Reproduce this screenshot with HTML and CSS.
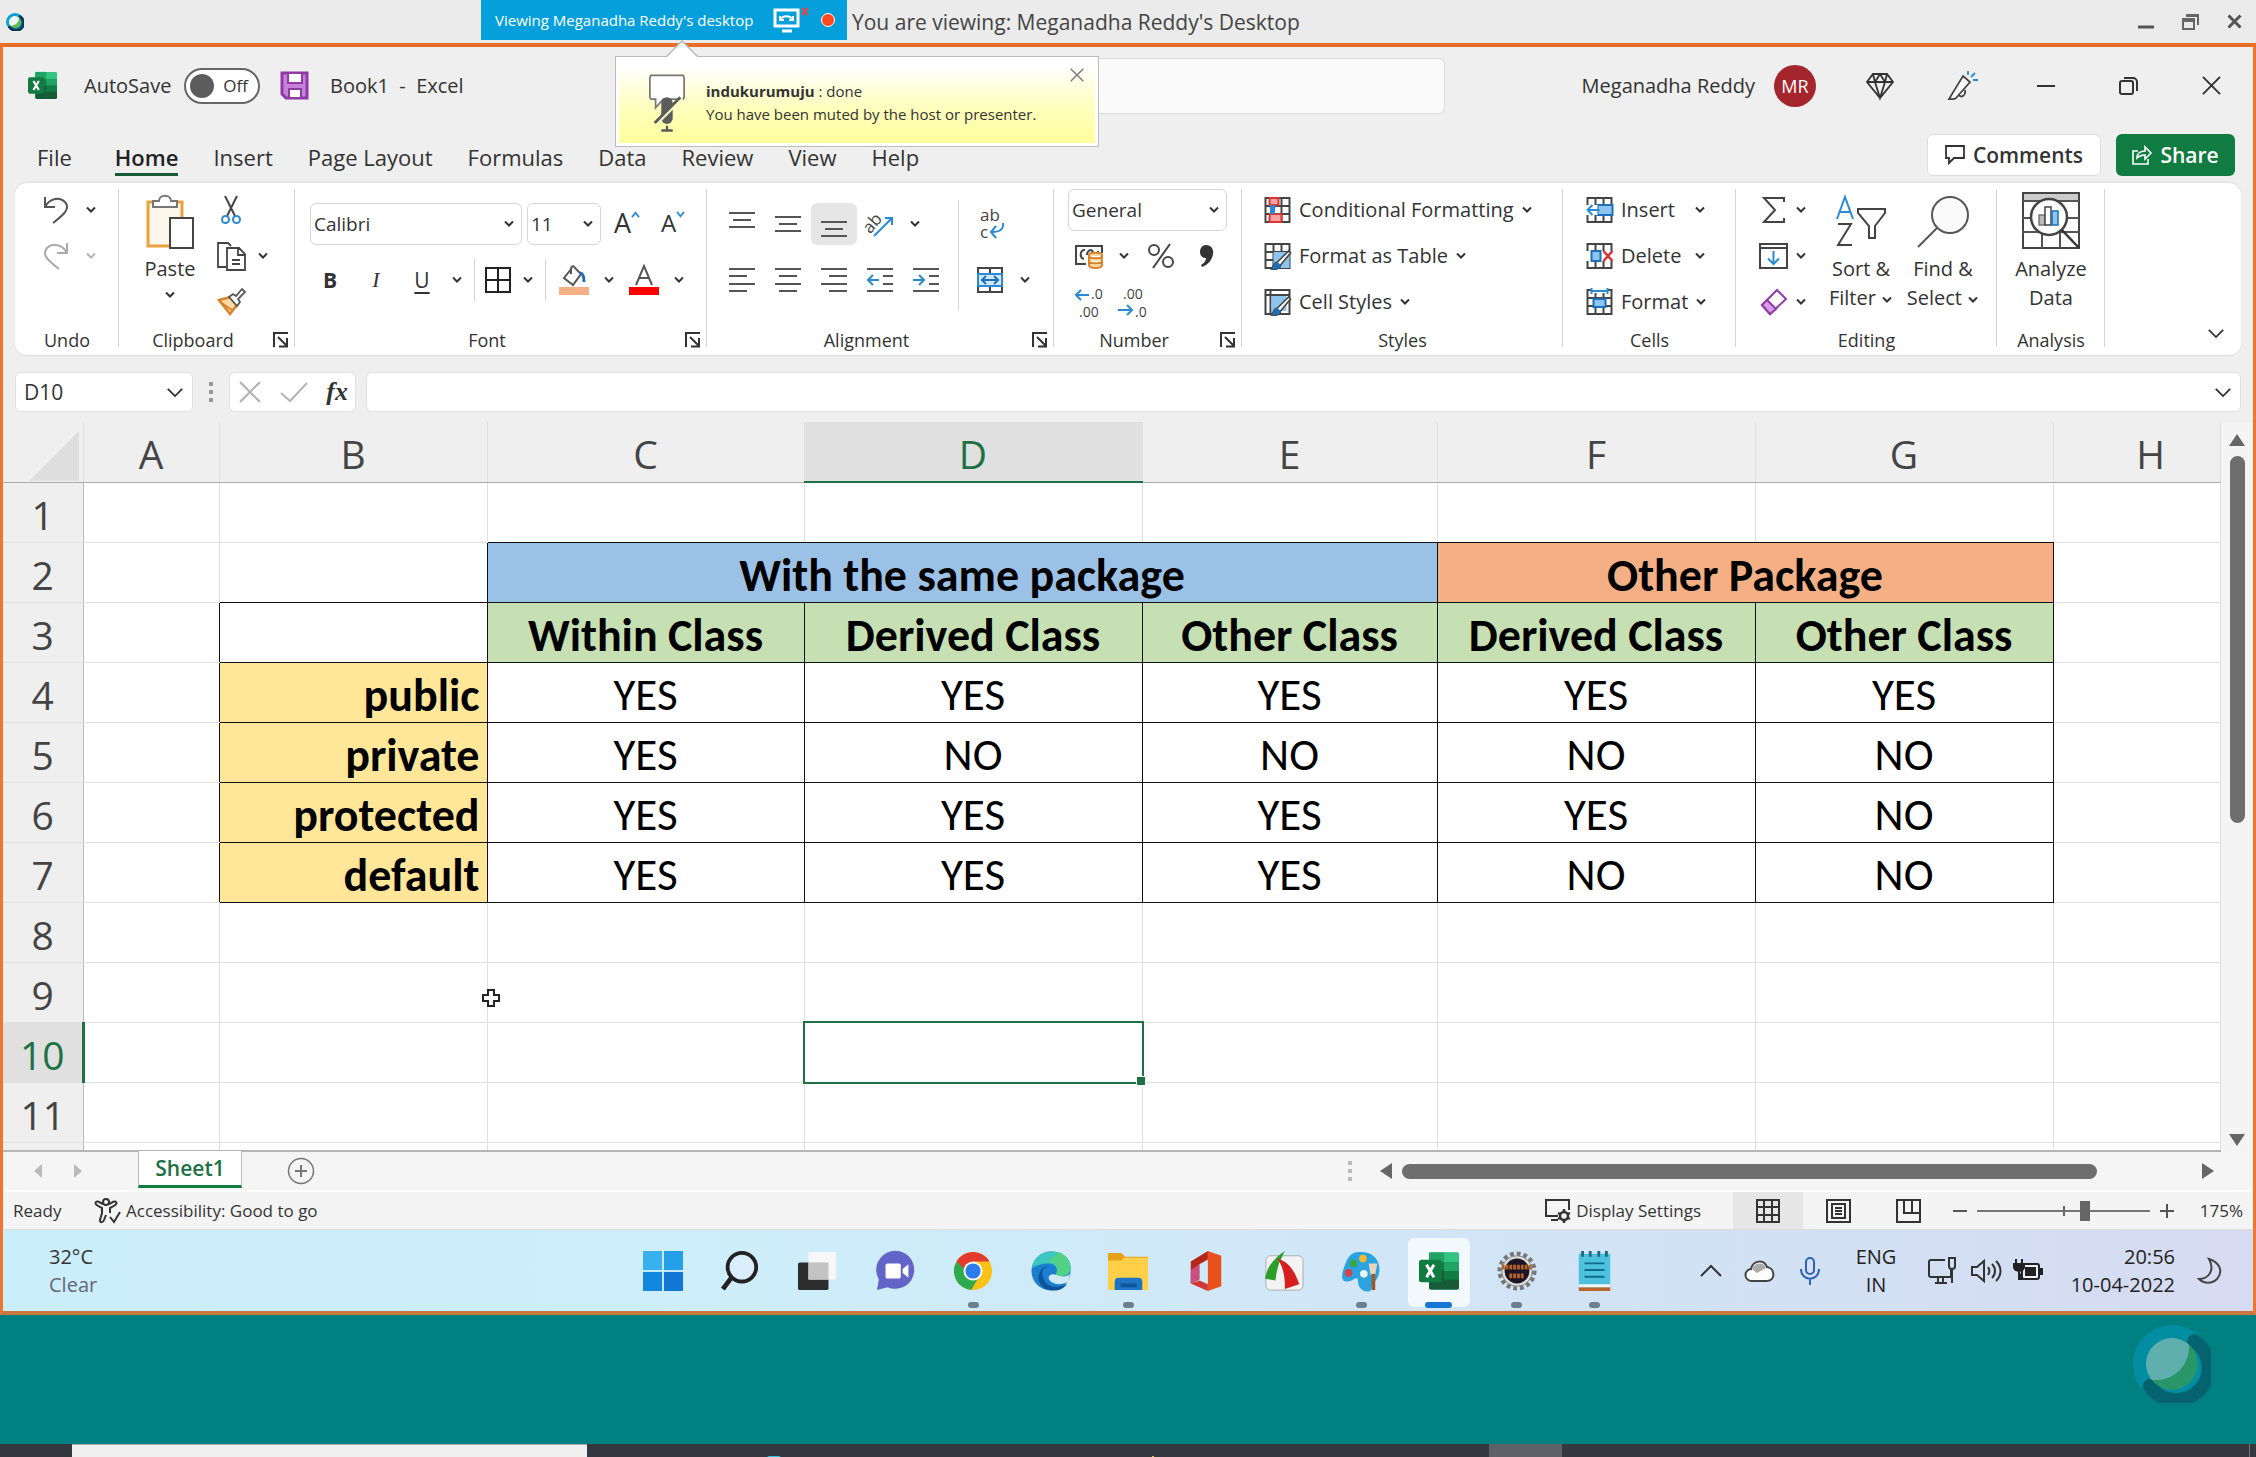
FILE: index.html
```html
<!DOCTYPE html>
<html lang="en">
<head>
<meta charset="utf-8">
<title>Meganadha Reddy's Desktop</title>
<link rel="stylesheet" href="styles.css">
</head>
<body>
<svg class="sprite" aria-hidden="true">
  <symbol id="chev" viewBox="0 0 12 8"><path d="M2 1.5l4 4 4-4" fill="none" stroke="currentColor" stroke-width="2"/></symbol>
  <symbol id="chev-lg" viewBox="0 0 20 12"><path d="M2 2l8 8 8-8" fill="none" stroke="currentColor" stroke-width="2"/></symbol>
  <symbol id="launch" viewBox="0 0 16 16"><path d="M1 15V1h14M5 5l9 9M14 6v8.500H6" fill="none" stroke="#333" stroke-width="2"/></symbol>
  <symbol id="x" viewBox="0 0 20 20"><path d="M1 1l18 18M19 1L1 19" fill="none" stroke="currentColor" stroke-width="2"/></symbol>
  <symbol id="excel" viewBox="0 0 32 30">
    <path d="M10 0h20a2 2 0 0 1 2 2v26a2 2 0 0 1-2 2H10a2 2 0 0 1-2-2V2a2 2 0 0 1 2-2z" fill="#21a366"/>
    <path d="M8 0h12v8H8z" fill="#21a366"/><path d="M20 0h10a2 2 0 0 1 2 2v6H20z" fill="#33c481"/><path d="M8 8h12v7H8zM20 8h12v7H20z" fill="#107c41"/><path d="M20 8h12v7H20z" fill="#21a366"/>
    <path d="M8 15h12v15H10a2 2 0 0 1-2-2z" fill="#185c37"/><path d="M20 15h12v8H20z" fill="#107c41"/><path d="M20 22h12v6a2 2 0 0 1-2 2H20z" fill="#185c37"/>
    <rect y="6" width="18" height="18" rx="2" fill="#107c41"/><path d="M6 10l6 10M12 10L6 20" stroke="#fff" stroke-width="2.400"/>
  </symbol>
  <symbol id="webex" viewBox="0 0 40 40">
    <circle cx="20" cy="20" r="20" fill="#07a2d8"/>
    <path d="M31.300 8.200a16.500 16.500 0 1 1-22.800 23" fill="none" stroke="#0b3a56" stroke-width="7" stroke-linecap="round"/>
    <circle cx="20" cy="20" r="13.200" fill="#64b948"/><path d="M28.700 10.100C29 21 21 29 9.600 28.200A13.200 13.200 0 0 1 28.700 10.100z" fill="#eef6f6"/>
  </symbol>
  <symbol id="grid" viewBox="0 0 28 28"><path d="M2 2h24v24H2zM2 10h24M2 18h24M10 2v24M18 2v24" fill="#fff" stroke="#444" stroke-width="2"/></symbol>
</svg>

<header class="viewer-bar">
  <svg class="viewer-logo"><use href="#webex"/></svg>
  <div class="share-tab">
    <span>Viewing Meganadha Reddy's desktop</span>
    <svg width="38" height="28" viewBox="0 0 38 28"><path d="M2 4h23v16H2z" fill="none" stroke="#fff" stroke-width="3"/><path d="M7 14c3-5 10-5 13 0M7 10v4h4M20 10v4h-4" fill="none" stroke="#fff" stroke-width="2"/><path d="M9 25h10" stroke="#fff" stroke-width="3"/><path d="M29 2l6 7M35 2l-6 7" stroke="#e0483c" stroke-width="2"/></svg>
    <i class="rec"></i>
  </div>
  <h1>You are viewing: Meganadha Reddy's Desktop</h1>
  <div class="viewer-controls">
    <button aria-label="Minimize"><svg width="16" height="16" viewBox="0 0 16 16"><path d="M0 13h16" stroke="#555" stroke-width="3"/></svg></button>
    <button aria-label="Restore"><svg width="17" height="17" viewBox="0 0 17 17"><path d="M1 6h11v10H1zM1 8h11M4 2h12v10M4 3h12" fill="none" stroke="#666" stroke-width="2"/></svg></button>
    <button aria-label="Close"><svg width="15" height="15" viewBox="0 0 20 20"><path d="M2 2l16 16M18 2L2 18" stroke="#555" stroke-width="4"/></svg></button>
  </div>
  <aside class="toast">
    <svg class="toast-arrow" viewBox="0 0 32 18"><path d="M0 17L16 1l16 16v1H0z" fill="#fff"/><path d="M0 17L16 1l16 16" fill="none" stroke="#bbb" stroke-width="1.500"/></svg>
    <svg class="toast-icon" viewBox="0 0 40 60"><path d="M3 1h34l1 2v21l-1 2H16l-8 9v-9H3l-1-2V3z" fill="#fff" stroke="#777" stroke-width="1.800"/><rect x="14" y="24" width="12" height="28" rx="6" fill="#5c5c5c"/><path d="M10 51L36 25" stroke="#fdfdc8" stroke-width="3"/><path d="M7 51L34 24" stroke="#5c5c5c" stroke-width="3"/><path d="M20 54v4M14 59h12" stroke="#5c5c5c" stroke-width="2.500"/></svg>
    <p><b>indukurumuju</b> : done<br>You have been muted by the host or presenter.</p>
    <button aria-label="Dismiss"><svg width="14" height="14"><use href="#x"/></svg></button>
  </aside>
</header>

<main class="remote">
  <div class="titlebar">
    <svg class="app-icon"><use href="#excel"/></svg>
    <label class="autosave">AutoSave <input type="checkbox" class="sr"><span class="toggle">Off</span></label>
    <button class="save" aria-label="Save"><svg width="29" height="29" viewBox="0 0 29 29"><path d="M2 2h25v25H6l-4-4z" fill="#c582d6" stroke="#8f3aa5" stroke-width="3"/><path d="M8 2h14v10H8zM9 18h12v9H9z" fill="#fff" stroke="#8f3aa5" stroke-width="2"/></svg></button>
    <span class="doc-name">Book1&nbsp; -&nbsp; Excel</span>
    <input class="search" type="search" aria-label="Search">
    <span class="user">Meganadha Reddy</span>
    <span class="avatar">MR</span>
    <div class="window-tools">
      <button aria-label="Premium"><svg width="28" height="28" viewBox="0 0 28 28"><path d="M7 2h14l6 8-13 16L1 10zM1 10h26M7 2l2 8 5 16 5-16 2-8M14 2l-5 8M14 2l5 8" fill="none" stroke="#333" stroke-width="1.800"/></svg></button>
      <button aria-label="Coming soon"><svg width="30" height="30" viewBox="0 0 30 30"><path d="M15 5l7 6L8 27c-2 2-5 1-7 1zM11 24c2 3 7 1 6-5" fill="#fff" stroke="#444" stroke-width="1.800"/><path d="M20 4V0M23 6l4-4M25 9h5" stroke="#2a8ad4" stroke-width="1.800"/></svg></button>
      <button aria-label="Minimize Excel"><svg width="18" height="18" viewBox="0 0 18 18"><path d="M0 9h18" stroke="#333" stroke-width="2"/></svg></button>
      <button aria-label="Restore Excel"><svg width="19" height="19" viewBox="0 0 19 19"><rect x="1" y="5" width="13" height="13" rx="2" fill="none" stroke="#333" stroke-width="2"/><path d="M5 2h9a4 4 0 0 1 4 4v9" fill="none" stroke="#333" stroke-width="2"/></svg></button>
      <button aria-label="Close Excel"><svg width="19" height="19"><use href="#x"/></svg></button>
    </div>
  </div>

  <nav class="tabs">
    <a href="#" class="file">File</a><a href="#" class="active">Home</a><a href="#">Insert</a><a href="#">Page Layout</a><a href="#">Formulas</a><a href="#">Data</a><a href="#">Review</a><a href="#">View</a><a href="#">Help</a>
    <button class="comments"><svg width="20" height="20" viewBox="0 0 20 20"><path d="M1 1h18v12H9l-5 5v-5H1z" fill="none" stroke="#333" stroke-width="1.800"/></svg>Comments</button>
    <button class="share"><svg width="20" height="20" viewBox="0 0 20 20"><path d="M6 6H1v13h15v-5M5 13c0-5 4-7 8-7V2l6 6-6 6v-4c-4 0-6 1-8 3z" fill="none" stroke="#fff" stroke-width="1.600"/></svg>Share</button>
  </nav>

  <section class="ribbon">
    <div class="group g-undo">
      <div class="rows">
        <div class="row"><button class="cell" aria-label="Undo"><svg width="28" height="28" viewBox="0 0 28 28"><path d="M3 1v10h10M3 11c4-8 14-11 20-5 6 7-2 13-12 21" fill="none" stroke="#555" stroke-width="2"/></svg></button><button class="drop" aria-label="Undo list"><svg><use href="#chev"/></svg></button></div>
        <div class="row dim"><button class="cell" aria-label="Redo"><svg width="28" height="28" viewBox="0 0 28 28"><path d="M25 1v10H15M25 11C21 3 11 0 5 6c-6 7 2 13 12 21" fill="none" stroke="#aaa" stroke-width="2"/></svg></button><button class="drop" aria-label="Redo list"><svg><use href="#chev"/></svg></button></div>
      </div>
      <div class="caption"><span>Undo</span></div>
    </div>

    <div class="group g-clip">
      <div class="body">
        <button class="big"><svg width="50" height="57" viewBox="0 0 50 57"><path d="M3 10h34v44H3z" fill="#fdf6ea" stroke="#e8a33d" stroke-width="3"/><path d="M8 15V9h6c0-7 12-7 12 0h6v6z" fill="#fff" stroke="#777" stroke-width="2"/><path d="M25 26h23v30H25z" fill="#fff" stroke="#444" stroke-width="2"/></svg><span>Paste</span><svg class="chev"><use href="#chev"/></svg></button>
        <div class="rows">
          <div class="row"><button class="cell" aria-label="Cut"><svg width="20" height="28" viewBox="0 0 20 28"><path d="M4 0l10 20M16 0L6 20" stroke="#444" stroke-width="2"/><circle cx="4.500" cy="23.500" r="3.500" fill="none" stroke="#2a8ad4" stroke-width="2"/><circle cx="15.500" cy="23.500" r="3.500" fill="none" stroke="#2a8ad4" stroke-width="2"/></svg></button></div>
          <div class="row"><button class="cell" aria-label="Copy"><svg width="29" height="29" viewBox="0 0 29 29"><path d="M9 25H1V1h10l3 3M10 6h12l6 6v16H10zM21 6v7h7M15 18h8M15 22h8" fill="#fff" stroke="#444" stroke-width="1.800"/></svg></button><button class="drop" aria-label="Copy options"><svg><use href="#chev"/></svg></button></div>
          <div class="row"><button class="cell" aria-label="Format Painter"><svg width="29" height="28" viewBox="0 0 29 28"><path d="M2 12l12-3 6 8-7 9z" fill="#fbd9a5" stroke="#d9822b" stroke-width="2.500"/><path d="M3 14l12 8" stroke="#d9822b" stroke-width="2"/><path d="M12 9l4-3 3 2 6-7 3 3-7 7 2 3-3 4z" fill="#fff" stroke="#555" stroke-width="1.800"/></svg></button></div>
        </div>
      </div>
      <div class="caption"><span>Clipboard</span><button aria-label="Clipboard settings"><svg><use href="#launch"/></svg></button></div>
    </div>

    <div class="group g-font">
      <div class="lines">
        <div class="row">
          <span class="picker pick-font"><select aria-label="Font"><option>Calibri</option></select><svg><use href="#chev"/></svg></span>
          <span class="picker pick-size"><select aria-label="Font size"><option>11</option></select><svg><use href="#chev"/></svg></span>
          <button class="cell glyph-lg" aria-label="Increase font size">A<svg class="hat" viewBox="0 0 10 8"><path d="M1 7l4-5 4 5" fill="none" stroke="#2a8ad4" stroke-width="2"/></svg></button>
          <button class="cell glyph-md" aria-label="Decrease font size">A<svg class="hat" viewBox="0 0 10 8"><path d="M1 1l4 5 4-5" fill="none" stroke="#2a8ad4" stroke-width="2"/></svg></button>
        </div>
        <div class="row">
          <button class="cell glyph bold">B</button><button class="cell glyph ital">I</button><button class="cell glyph under">U</button><button class="drop" aria-label="Underline style"><svg><use href="#chev"/></svg></button>
          <i class="rule"></i>
          <button class="cell narrow" aria-label="Borders"><svg width="28" height="28" viewBox="0 0 28 28"><path d="M2 2h24v24H2zM14 2v24M2 14h24" fill="none" stroke="#222" stroke-width="2"/></svg></button><button class="drop" aria-label="Border style"><svg><use href="#chev"/></svg></button>
          <i class="rule"></i>
          <button class="cell" aria-label="Fill color"><svg width="30" height="30" viewBox="0 0 30 30"><path d="M13 3L5 13l9 7 8-11-6-6c-1-3-4-2-4 1v5" fill="#fff" stroke="#555" stroke-width="2"/><path d="M21 8c3 0 4 3 4 9" fill="none" stroke="#1c6fb8" stroke-width="3"/><path d="M0 22h30v8H0z" fill="#f4b084"/></svg></button><button class="drop" aria-label="Fill colors"><svg><use href="#chev"/></svg></button>
          <button class="cell" aria-label="Font color"><svg width="30" height="30" viewBox="0 0 30 30"><path d="M7 20L15 1l8 19M10 13h10" fill="none" stroke="#555" stroke-width="2"/><path d="M0 22h30v8H0z" fill="#f00"/></svg></button><button class="drop" aria-label="Font colors"><svg><use href="#chev"/></svg></button>
        </div>
      </div>
      <div class="caption"><span>Font</span><button aria-label="Font settings"><svg><use href="#launch"/></svg></button></div>
    </div>

    <div class="group g-align">
      <div class="body">
        <div class="lines">
          <div class="row">
            <button class="cell" aria-label="Top align"><svg class="al" viewBox="0 0 26 26"><path d="M0 2h26M4 9h18M0 16h26"/></svg></button>
            <button class="cell" aria-label="Middle align"><svg class="al" viewBox="0 0 26 26"><path d="M0 6h26M4 13h18M0 20h26"/></svg></button>
            <button class="cell on" aria-label="Bottom align"><svg class="al" viewBox="0 0 26 26"><path d="M0 11h26M4 18h18M0 25h26"/></svg></button>
            <button class="cell orient" aria-label="Orientation"><svg width="30" height="30" viewBox="0 0 30 30"><text x="-1" y="20" transform="rotate(-50 8 16)" class="icon-text">ab</text><path d="M9 27L27 9M27 16V9h-7" fill="none" stroke="#2a8ad4" stroke-width="2"/></svg></button><button class="drop" aria-label="Orientation list"><svg><use href="#chev"/></svg></button>
          </div>
          <div class="row">
            <button class="cell" aria-label="Align left"><svg class="al" viewBox="0 0 26 26"><path d="M0 2h26M0 9h18M0 17h26M0 24h18"/></svg></button>
            <button class="cell" aria-label="Center"><svg class="al" viewBox="0 0 26 26"><path d="M0 2h26M4 9h18M0 17h26M4 24h18"/></svg></button>
            <button class="cell" aria-label="Align right"><svg class="al" viewBox="0 0 26 26"><path d="M0 2h26M8 9h18M0 17h26M8 24h18"/></svg></button>
            <button class="cell" aria-label="Decrease indent"><svg class="al" viewBox="0 0 26 26"><path d="M0 2h26M16 9h10M16 17h10M0 24h26"/><path class="bl" d="M12 13H1M6 8l-5 5 5 5"/></svg></button>
            <button class="cell" aria-label="Increase indent"><svg class="al" viewBox="0 0 26 26"><path d="M0 2h26M16 9h10M16 17h10M0 24h26"/><path class="bl" d="M0 13h11M6 8l5 5-5 5"/></svg></button>
          </div>
        </div>
        <i class="rule tall"></i>
        <div class="lines">
          <div class="row"><button class="cell" aria-label="Wrap text"><svg width="28" height="30" viewBox="0 0 28 30"><text x="4" y="12" class="icon-text">ab</text><text x="4" y="29" class="icon-text">c</text><path d="M27 14c1 6-3 9-11 9M20 17l-5 6 5 6" fill="none" stroke="#2a8ad4" stroke-width="2"/></svg></button></div>
          <div class="row"><button class="cell" aria-label="Merge and center"><svg width="28" height="28" viewBox="0 0 28 28"><path d="M2 2h24v24H2z" fill="#fff" stroke="#444" stroke-width="2"/><path d="M14 2v24" stroke="#444" stroke-width="2"/><path d="M2 8h24v12H2z" fill="#d3e8f8" stroke="#2a8ad4" stroke-width="2"/><path d="M6 14h16M10 10l-4 4 4 4M18 10l4 4-4 4" fill="none" stroke="#1c6fb8" stroke-width="2"/></svg></button><button class="drop" aria-label="Merge options"><svg><use href="#chev"/></svg></button></div>
        </div>
      </div>
      <div class="caption"><span>Alignment</span><button aria-label="Alignment settings"><svg><use href="#launch"/></svg></button></div>
    </div>

    <div class="group g-num">
      <div class="rows">
        <div class="row"><span class="picker pick-num"><select aria-label="Number format"><option>General</option></select><svg><use href="#chev"/></svg></span></div>
        <div class="row">
          <button class="cell" aria-label="Accounting format"><svg width="30" height="26" viewBox="0 0 30 26"><path d="M28 10V3H2v18h10" fill="none" stroke="#444" stroke-width="2"/><path d="M11 7c-5-1-6 8-1 9M19 9c-2-4-6-1-6 3M24 8v3" fill="none" stroke="#444" stroke-width="2"/><path d="M15 12c0-3 13-3 13 0v10c0 4-13 4-13 0zM15 13c0 3 13 3 13 0M15 18c0 3 13 3 13 0" fill="#fbd9a5" stroke="#d9822b" stroke-width="2"/></svg></button><button class="drop" aria-label="Currency list"><svg><use href="#chev"/></svg></button>
          <button class="cell" aria-label="Percent"><svg width="28" height="28" viewBox="0 0 28 28"><circle cx="7" cy="8" r="5" fill="none" stroke="#444" stroke-width="2"/><circle cx="21" cy="20" r="5" fill="none" stroke="#444" stroke-width="2"/><path d="M23 2L6 26" stroke="#444" stroke-width="2"/></svg></button>
          <button class="cell" aria-label="Comma style"><svg width="14" height="24" viewBox="0 0 14 24"><path d="M6 1c5 0 8 4 7 9-1 6-5 11-11 13l-1-2c3-2 5-4 5-7-8 1-8-13 0-13z" fill="#333"/></svg></button>
        </div>
        <div class="row">
          <button class="cell" aria-label="Increase decimal"><svg width="30" height="30" viewBox="0 0 30 30"><path d="M15 8H2M7 3L2 8l5 5" fill="none" stroke="#2a8ad4" stroke-width="2"/><text x="17" y="12" class="icon-num">.0</text><text x="5" y="30" class="icon-num">.00</text></svg></button>
          <button class="cell" aria-label="Decrease decimal"><svg width="30" height="30" viewBox="0 0 30 30"><path d="M0 23h14M9 18l5 5-5 5" fill="none" stroke="#2a8ad4" stroke-width="2"/><text x="5" y="12" class="icon-num">.00</text><text x="17" y="30" class="icon-num">.0</text></svg></button>
        </div>
      </div>
      <div class="caption"><span>Number</span><button aria-label="Number settings"><svg><use href="#launch"/></svg></button></div>
    </div>

    <div class="group g-styles">
      <div class="rows">
        <div class="row"><button class="item"><svg width="29" height="28" viewBox="0 0 28 28"><use href="#grid"/><path d="M6 2h9v7H6zM6 18h12v8H6z" fill="#f7a3a3" stroke="#d33" stroke-width="2"/><path d="M9 9v9" stroke="#2a8ad4" stroke-width="5"/></svg><span>Conditional Formatting</span><svg class="chev"><use href="#chev"/></svg></button></div>
        <div class="row"><button class="item"><svg width="29" height="28" viewBox="0 0 28 28"><use href="#grid"/><path d="M10 10h16v16H10z" fill="#8ec5ee"/><path d="M25 9L14 20c-4 0-4 5-6 7 5 1 9-1 9-4l10-12z" fill="#fff" stroke="#444" stroke-width="1.600"/><path d="M14 20c-4 0-4 5-6 7 5 1 9-1 9-4z" fill="#1c6fb8"/></svg><span>Format as Table</span><svg class="chev"><use href="#chev"/></svg></button></div>
        <div class="row"><button class="item"><svg width="29" height="28" viewBox="0 0 28 28"><path d="M2 2h24v24H2zM2 7h24M7 2v24" fill="#fff" stroke="#444" stroke-width="2"/><path d="M8 8h15v15H8z" fill="#8ec5ee"/><path d="M25 9L14 20c-4 0-4 5-6 7 5 1 9-1 9-4l10-12z" fill="#fff" stroke="#444" stroke-width="1.600"/><path d="M14 20c-4 0-4 5-6 7 5 1 9-1 9-4z" fill="#1c6fb8"/></svg><span>Cell Styles</span><svg class="chev"><use href="#chev"/></svg></button></div>
      </div>
      <div class="caption"><span>Styles</span></div>
    </div>

    <div class="group g-cells">
      <div class="rows">
        <div class="row"><button class="item"><svg width="29" height="28" viewBox="0 0 28 28"><use href="#grid"/><path d="M12 9h15v10H12z" fill="#8ec5ee" stroke="#1c6fb8" stroke-width="2"/><path d="M0 9h12v10H0z" fill="#fff"/><path d="M14 14H2M7 9l-5 5 5 5" fill="none" stroke="#2a8ad4" stroke-width="2"/></svg><span>Insert</span><svg class="chev"><use href="#chev"/></svg></button></div>
        <div class="row"><button class="item"><svg width="29" height="28" viewBox="0 0 28 28"><use href="#grid"/><path d="M0 9h28v10H0z" fill="#fff"/><path d="M6 9h9v10H6z" fill="#8ec5ee" stroke="#1c6fb8" stroke-width="2"/><path d="M18 9l9 10M27 9l-9 10" stroke="#d33" stroke-width="2.500"/></svg><span>Delete</span><svg class="chev"><use href="#chev"/></svg></button></div>
        <div class="row"><button class="item"><svg width="29" height="28" viewBox="0 0 28 28"><use href="#grid"/><path d="M6 0h16v5H6z" fill="#fff"/><path d="M6 3h16M6 0v6M22 0v6" stroke="#2a8ad4" stroke-width="2"/><path d="M8 11h12v8H8z" fill="#8ec5ee" stroke="#1c6fb8" stroke-width="2"/></svg><span>Format</span><svg class="chev"><use href="#chev"/></svg></button></div>
      </div>
      <div class="caption"><span>Cells</span></div>
    </div>

    <div class="group g-edit">
      <div class="body">
        <div class="rows">
          <div class="row"><button class="cell" aria-label="AutoSum"><svg width="24" height="28" viewBox="0 0 24 28"><path d="M22 6V2H2l11 12L2 26h20v-4" fill="none" stroke="#444" stroke-width="2"/></svg></button><button class="drop" aria-label="AutoSum list"><svg><use href="#chev"/></svg></button></div>
          <div class="row"><button class="cell" aria-label="Fill"><svg width="29" height="26" viewBox="0 0 29 26"><path d="M1 1h27v24H1zM1 5h27" fill="none" stroke="#444" stroke-width="2"/><path d="M14.500 8v13M9 15.500l5.500 5.500 5.500-5.500" fill="none" stroke="#2a8ad4" stroke-width="2"/></svg></button><button class="drop" aria-label="Fill list"><svg><use href="#chev"/></svg></button></div>
          <div class="row"><button class="cell" aria-label="Clear"><svg width="28" height="28" viewBox="0 0 28 28"><path d="M17 2l9 9-16 15-8-9z" fill="#fff" stroke="#8f3aa5" stroke-width="2"/><path d="M7 12l9 9-6 5-8-9z" fill="#d89be6" stroke="#8f3aa5" stroke-width="2"/></svg></button><button class="drop" aria-label="Clear list"><svg><use href="#chev"/></svg></button></div>
        </div>
        <button class="big"><svg width="50" height="57" viewBox="0 0 50 57"><path d="M1 27L9 5l8 22M4 20h10" fill="none" stroke="#2a8ad4" stroke-width="2"/><path d="M2 32h13L2 53h14" fill="none" stroke="#444" stroke-width="2"/><path d="M22 17h27v4L39 34v12h-6V34L22 21z" fill="none" stroke="#444" stroke-width="2"/></svg><span>Sort &amp;<br>Filter <svg class="chev"><use href="#chev"/></svg></span></button>
        <button class="big"><svg width="52" height="57" viewBox="0 0 52 57"><circle cx="33" cy="23" r="18" fill="#fafafa" stroke="#555" stroke-width="2"/><path d="M20 36L1 55" stroke="#555" stroke-width="2"/></svg><span>Find &amp;<br>Select <svg class="chev"><use href="#chev"/></svg></span></button>
      </div>
      <div class="caption"><span>Editing</span></div>
    </div>

    <div class="group g-analysis">
      <div class="body">
        <button class="big"><svg width="58" height="57" viewBox="0 0 58 57"><path d="M1 1h56v55H1z" fill="#fff" stroke="#444" stroke-width="2"/><path d="M2 2h54v7H2z" fill="#ccc"/><path d="M1 9h56M1 26h56M1 40h56M20 40v16M38 40v16" stroke="#555" stroke-width="2"/><circle cx="27" cy="25" r="18" fill="#fff" stroke="#444" stroke-width="2.500"/><path d="M40 38l17 18" stroke="#333" stroke-width="2.500"/><path d="M17 23h6v10h-6z" fill="#bbb" stroke="#777" stroke-width="1.500"/><path d="M23 15h6v18h-6z" fill="#fff" stroke="#444" stroke-width="1.500"/><path d="M30 19h6v14h-6z" fill="#8ec5ee" stroke="#1c6fb8" stroke-width="1.500"/></svg><span>Analyze<br>Data</span></button>
      </div>
      <div class="caption"><span>Analysis</span></div>
    </div>
    <button class="collapse" aria-label="Collapse ribbon"><svg width="18" height="11"><use href="#chev-lg"/></svg></button>
  </section>

  <div class="formula">
    <label class="field namebox"><input value="D10" aria-label="Name box"><svg width="18" height="11"><use href="#chev-lg"/></svg></label>
    <svg class="dots" viewBox="0 0 4 20"><path d="M0 0h4v4H0zM0 8h4v4H0zM0 16h4v4H0z" fill="#999"/></svg>
    <div class="field fx">
      <button aria-label="Cancel" class="dim"><svg width="22" height="22"><use href="#x"/></svg></button>
      <button aria-label="Enter" class="dim"><svg width="28" height="20" viewBox="0 0 28 20"><path d="M1 11l9 8L27 1" fill="none" stroke="currentColor" stroke-width="2"/></svg></button>
      <button class="fxbtn">fx</button>
    </div>
    <label class="field entry"><input aria-label="Formula bar"><svg width="18" height="11"><use href="#chev-lg"/></svg></label>
  </div>

  <div class="sheet">
    <table>
      <colgroup><col class="c0"><col class="cA"><col class="cB"><col class="cC"><col class="cD"><col class="cE"><col class="cF"><col class="cG"><col></colgroup>
      <thead><tr><th class="corner"><svg width="50" height="50" viewBox="0 0 50 50"><path d="M50 0v50H0z" fill="#dedede"/></svg></th><th>A</th><th>B</th><th>C</th><th class="sel">D</th><th>E</th><th>F</th><th>G</th><th class="colH">H</th></tr></thead>
      <tbody>
        <tr><th>1</th><td></td><td></td><td class="over"></td><td class="over"></td><td class="over"></td><td class="over"></td><td class="over"></td><td></td></tr>
        <tr><th>2</th><td></td><td class="over"></td><td colspan="3" class="box head blue">With the same package</td><td colspan="2" class="box head orange">Other Package</td><td></td></tr>
        <tr><th>3</th><td></td><td class="box"></td><td class="box head green">Within Class</td><td class="box head green">Derived Class</td><td class="box head green">Other Class</td><td class="box head green">Derived Class</td><td class="box head green">Other Class</td><td></td></tr>
        <tr><th>4</th><td></td><td class="box key">public</td><td class="box">YES</td><td class="box">YES</td><td class="box">YES</td><td class="box">YES</td><td class="box">YES</td><td></td></tr>
        <tr><th>5</th><td></td><td class="box key">private</td><td class="box">YES</td><td class="box">NO</td><td class="box">NO</td><td class="box">NO</td><td class="box">NO</td><td></td></tr>
        <tr><th>6</th><td></td><td class="box key">protected</td><td class="box">YES</td><td class="box">YES</td><td class="box">YES</td><td class="box">YES</td><td class="box">NO</td><td></td></tr>
        <tr><th>7</th><td></td><td class="box key">default</td><td class="box">YES</td><td class="box">YES</td><td class="box">YES</td><td class="box">NO</td><td class="box">NO</td><td></td></tr>
        <tr><th>8</th><td></td><td></td><td></td><td></td><td></td><td></td><td></td><td></td></tr>
        <tr><th>9</th><td></td><td class="pointer-cell"><svg class="pointer" viewBox="0 0 18 18"><path d="M6 1h6v5h5v6h-5v5H6v-5H1V6h5z" fill="#fff" stroke="#222" stroke-width="2"/></svg></td><td></td><td></td><td></td><td></td><td></td><td></td></tr>
        <tr><th class="sel">10</th><td></td><td></td><td></td><td class="current"></td><td></td><td></td><td></td><td></td></tr>
        <tr><th>11</th><td></td><td></td><td></td><td></td><td></td><td></td><td></td><td></td></tr>
        <tr class="peek"><th></th><td></td><td></td><td></td><td></td><td></td><td></td><td></td><td></td></tr>
      </tbody>
    </table>
    <div class="vscroll">
      <svg width="16" height="12" viewBox="0 0 16 12"><path d="M8 0l8 12H0z" fill="#666"/></svg>
      <div class="vtrack"><i></i></div>
      <svg width="16" height="12" viewBox="0 0 16 12"><path d="M0 0h16L8 12z" fill="#666"/></svg>
    </div>
  </div>

  <div class="sheetbar">
    <button class="nav" aria-label="Previous sheet"><svg width="8" height="14" viewBox="0 0 8 14"><path d="M8 0v14L0 7z" fill="#bbb"/></svg></button>
    <button class="nav" aria-label="Next sheet"><svg width="8" height="14" viewBox="0 0 8 14"><path d="M0 0v14l8-7z" fill="#bbb"/></svg></button>
    <button class="sheet-tab">Sheet1</button>
    <button class="add" aria-label="New sheet"><svg width="28" height="28" viewBox="0 0 28 28"><circle cx="14" cy="14" r="12.500" fill="none" stroke="#777" stroke-width="1.500"/><path d="M8 14h12M14 8v12" stroke="#777" stroke-width="2"/></svg></button>
    <div class="hscroll">
      <svg class="dots" viewBox="0 0 4 20"><path d="M0 0h4v4H0zM0 8h4v4H0zM0 16h4v4H0z" fill="#bbb"/></svg>
      <svg width="12" height="16" viewBox="0 0 12 16"><path d="M12 0v16L0 8z" fill="#666"/></svg>
      <div class="htrack"><i></i></div>
      <svg width="12" height="16" viewBox="0 0 12 16"><path d="M0 0v16l12-8z" fill="#666"/></svg>
    </div>
  </div>

  <footer class="status">
    <span class="ready">Ready</span>
    <button class="access"><svg width="26" height="26" viewBox="0 0 26 26"><circle cx="11" cy="4" r="3" fill="none" stroke="#333" stroke-width="2"/><path d="M8 6C5 5 3 2 1 4s2 4 6 6v5L5 22c0 3 3 3 4 0l2-5M14 6c3-1 5-4 7-2s-2 4-6 6v5M15 19l4 5 6-10" fill="none" stroke="#333" stroke-width="2"/></svg>Accessibility: Good to go</button>
    <button class="display"><svg width="26" height="24" viewBox="0 0 26 24"><path d="M13 17H1V1h23v10M6 21h7" fill="none" stroke="#333" stroke-width="2"/><circle cx="19" cy="17" r="4" fill="none" stroke="#333" stroke-width="2.500"/><path d="M19 10v3M19 21v3M13 14l2 1M23 19l2 1M25 14l-2 1M15 19l-2 1" stroke="#333" stroke-width="2.500"/></svg>Display Settings</button>
    <button class="view on" aria-label="Normal view"><svg width="24" height="24" viewBox="0 0 24 24"><path d="M1 1h22v22H1zM1 8h22M1 16h22M8 1v22M16 1v22" fill="none" stroke="#333" stroke-width="2"/></svg></button>
    <button class="view" aria-label="Page layout view"><svg width="25" height="24" viewBox="0 0 25 24"><path d="M1 1h23v22H1zM6 5h13v14H6zM9 9h7M9 12h7M9 15h7" fill="none" stroke="#333" stroke-width="2"/></svg></button>
    <button class="view" aria-label="Page break view"><svg width="25" height="24" viewBox="0 0 25 24"><path d="M1 1h23v22H1zM8 1v13h8V1M16 14h8" fill="none" stroke="#333" stroke-width="2"/></svg></button>
    <button class="zoom-btn" aria-label="Zoom out"><svg width="14" height="14" viewBox="0 0 14 14"><path d="M0 7h14" stroke="#555" stroke-width="2"/></svg></button>
    <input class="zoom" type="range" min="0" max="100" value="63" aria-label="Zoom">
    <button class="zoom-btn" aria-label="Zoom in"><svg width="14" height="14" viewBox="0 0 14 14"><path d="M0 7h14M7 0v14" stroke="#555" stroke-width="2"/></svg></button>
    <span class="pct">175%</span>
  </footer>

  <div class="taskbar">
    <div class="weather">32°C<br><span>Clear</span></div>
    <div class="apps">
      <button aria-label="Start"><svg viewBox="0 0 42 42"><path d="M0 0h20v20H0z" fill="#3ab0ee"/><path d="M22 0h20v20H22z" fill="#259fe8"/><path d="M0 22h20v20H0z" fill="#1187dd"/><path d="M22 22h20v20H22z" fill="#0f78d4"/></svg></button>
      <button aria-label="Search"><svg viewBox="0 0 42 42"><circle cx="23" cy="17" r="15" fill="#d9eefa" stroke="#222" stroke-width="4"/><path d="M12 28L3 40" stroke="#222" stroke-width="5"/></svg></button>
      <button aria-label="Task view"><svg viewBox="0 0 42 42"><rect y="12" width="32" height="29" rx="2" fill="#2d2d2d"/><path d="M11 1h29v29H11z" fill="#f7f7f7"/><path d="M11 12h21v18H11z" fill="#c3c3c3"/></svg></button>
      <button aria-label="Chat"><svg viewBox="0 0 42 42"><path d="M1 41l2-11A20 20 0 1 1 12 38z" fill="#6264c7"/><rect x="10" y="13" width="16" height="16" rx="2" fill="#fff"/><path d="M28 19l6-5v14l-6-5z" fill="#fff"/></svg></button>
      <button aria-label="Chrome" class="run"><svg viewBox="0 0 42 42"><circle cx="21" cy="21" r="20" fill="#fbc116"/><path d="M21 21L3.700 11A20 20 0 0 1 38.300 11H21z" fill="#e33b2e"/><path d="M3.700 11A20 20 0 0 0 19 41l9-15-14 0z" fill="#2da94f"/><path d="M3.700 11l18 0v10l-8 4z" fill="#e33b2e"/><path d="M3.700 11l9 15 5-2z" fill="#2da94f"/><circle cx="21" cy="21" r="10" fill="#fff"/><circle cx="21" cy="21" r="8" fill="#2b7de9"/></svg></button>
      <button aria-label="Edge"><svg viewBox="0 0 42 42"><circle cx="21" cy="21" r="20.500" fill="#1a7fd0"/><path d="M1 18C4-5 40-5 42 17c0 8-8 12-16 8 3-4 1-12-7-12-7 0-14 2-18 5z" fill="#3cc6c0"/><path d="M30 1c12 6 15 22 5 25-4 1-8 0-9-1 4-8-2-15-9-14z" fill="#5bd66b" opacity=".7"/><path d="M12 22c-1 14 13 20 26 12-7 12-28 9-30-4-1-8 4-14 11-14-4 1-7 3-7 6z" fill="#0f5499"/><path d="M26 25c-4-2-9 1-7 5 3 5 12 7 20 2l2-8c-4 4-10 3-15 1z" fill="#d0e9f8"/></svg></button>
      <button aria-label="File Explorer" class="run"><svg viewBox="0 0 42 42"><path d="M0 2h14l4 4h24v12H0z" fill="#e3a21a"/><path d="M0 10h14l3-3h25v34H0z" fill="#ffcf48"/><path d="M7 41V32a4 4 0 0 1 4-4h21a4 4 0 0 1 4 4v9z" fill="#1d74c4"/><path d="M13 34h17v4H13z" fill="#0e569c"/></svg></button>
      <button aria-label="Office"><svg viewBox="0 0 42 42"><path d="M5 11L23 0v9l-9 5v16l-9 4z" fill="#b5261a"/><path d="M23 0l14 5v32l-14 5z" fill="#e8501c"/><path d="M5 34l9-3 9 4v7z" fill="#d03838"/><path d="M5 20l9-6v16l-9 4z" fill="#c8507e"/></svg></button>
      <button aria-label="Drawing app"><svg viewBox="0 0 42 42"><rect x="2" y="5" width="39" height="36" rx="5" fill="#f3f3f3" stroke="#aaa"/><path d="M22 0C10 8 3 17 1 29l11 2c1-9 3-18 7-25z" fill="#2aa02a"/><path d="M14 8c11 3 18 12 23 27l-15 5c0-12-1-22-8-32z" fill="#d81f1f"/></svg></button>
      <button aria-label="Paint" class="run"><svg viewBox="0 0 42 42"><path d="M22 1c14 0 20 12 18 22s-8 9-8 16-14 3-14-6-5-1-11-1S-1 28 4 15 13 1 22 1z" fill="#2aa3e0"/><circle cx="8" cy="23" r="4" fill="#d6434e"/><circle cx="13" cy="13" r="4" fill="#3aa648"/><circle cx="23" cy="8" r="4" fill="#f4b92c"/><circle cx="24" cy="24" r="4" fill="#eaf4fb"/><path d="M29 13h9l-2 12h-5z" fill="#e5d5bd"/><path d="M32 24h4v17h-4z" fill="#9a5a2c"/></svg></button>
      <button aria-label="Excel" class="run open"><svg viewBox="0 0 32 30"><use href="#excel"/></svg></button>
      <button aria-label="Editor" class="run"><svg viewBox="0 0 42 42"><circle cx="21" cy="21" r="18" fill="none" stroke="#777" stroke-width="5" stroke-dasharray="4 3"/><circle cx="21" cy="21" r="16" fill="#ddd" stroke="#888"/><circle cx="21" cy="21" r="13" fill="#1d1524"/><path d="M5 17h32M13 26h15" stroke="#b5622a" stroke-width="5" stroke-dasharray="3 1"/></svg></button>
      <button aria-label="Notepad" class="run"><svg viewBox="0 0 42 42"><path d="M5 3h33v36H5z" fill="#4cc2df"/><path d="M5 38h33v4H5z" fill="#b8662e"/><path d="M5 35h33v3H5z" fill="#f5f5f5"/><path d="M9 0v6M17 0v6M26 0v6M34 0v6" stroke="#1c6a86" stroke-width="3"/><path d="M11 13h21M11 20h21M11 27h21" stroke="#136a8f" stroke-width="2"/></svg></button>
    </div>
    <div class="tray">
      <button aria-label="Hidden icons"><svg width="22" height="13" viewBox="0 0 22 13"><path d="M1 12L11 2l10 10" fill="none" stroke="#333" stroke-width="2"/></svg></button>
      <button class="cloud" aria-label="OneDrive"><svg width="30" height="22" viewBox="0 0 30 22"><path d="M7 21a6 6 0 0 1-1-12C8 0 19-1 22 7c8 1 9 14 0 14z" fill="#fff" stroke="#444" stroke-width="2"/><path d="M7 9C10 2 19 2 21 8l-9 5z" fill="#aaa"/></svg></button>
      <button aria-label="Microphone"><svg width="20" height="28" viewBox="0 0 20 28"><rect x="6" y="1" width="8" height="16" rx="4" fill="none" stroke="#2d62b5" stroke-width="2"/><path d="M1 12c0 13 18 13 18 0M10 22v6" fill="none" stroke="#2d62b5" stroke-width="2"/></svg></button>
      <span class="lang">ENG<br>IN</span>
      <button aria-label="Network"><svg width="29" height="28" viewBox="0 0 29 28"><path d="M17 3H3a2 2 0 0 0-2 2v13a2 2 0 0 0 2 2h20v-8M7 26h12M10 20v6M15 20v6" fill="none" stroke="#333" stroke-width="2"/><path d="M21 1h6v8a3 3 0 0 1-6 0zM24 11v15" fill="none" stroke="#333" stroke-width="2"/></svg></button>
      <button aria-label="Volume"><svg width="30" height="24" viewBox="0 0 30 24"><path d="M1 8h5l7-6v20l-7-6H1zM17 8c2 3 2 5 0 8M21 5c4 4 4 10 0 14M25 2c6 6 6 14 0 20" fill="none" stroke="#333" stroke-width="2"/></svg></button>
      <button aria-label="Battery"><svg width="29" height="24" viewBox="0 0 29 24"><rect x="8" y="5" width="17" height="15" rx="2" fill="#eef" stroke="#222" stroke-width="2"/><path d="M11 8h11v9H11zM26 9h3v7h-3z" fill="#222"/><path d="M2 0v5M8 0v5M0 5h10v3c0 5-10 5-10 0zM5 11v9h4" fill="#222" stroke="#222" stroke-width="2"/></svg></button>
      <time>20:56<br>10-04-2022</time>
      <button aria-label="Focus assist"><svg width="24" height="26" viewBox="0 0 24 26"><path d="M11 1c10 3 15 12 8 20-5 5-13 5-18 0 10 0 16-9 10-20z" fill="none" stroke="#444" stroke-width="2"/></svg></button>
    </div>
  </div>
</main>

<div class="desktop"><svg class="watermark"><use href="#webex"/></svg></div>
<div class="hostbar"><i class="h-search"></i><i class="h-cyan"></i><i class="h-yellow"></i><i class="h-active"></i><span class="h-lang">ENG</span><span>9:56 PM</span><i class="h-edge"></i></div>
</body>
</html>
```

FILE: styles.css
```css
* { box-sizing: border-box; }
body {
  margin: 0; min-height: 100vh; display: flex; flex-direction: column;
  font: 18px/24px "Segoe UI", "Open Sans", "Noto Sans", sans-serif; color: #333; background: #008080;
}
button, input, select { font: inherit; color: inherit; background: none; border: 0; padding: 0; margin: 0; }
button { display: flex; align-items: center; justify-content: center; }
svg { display: block; flex: none; overflow: visible; }
a { color: inherit; text-decoration: none; }
.sprite { position: absolute; width: 0; height: 0; }
.sr { position: absolute; opacity: 0; }

/* viewer window strip */
.viewer-bar { position: relative; display: flex; align-items: center; height: 43px; background: #ebebeb; }
.viewer-logo { width: 18px; height: 18px; margin: 0 457px 0 6px; }
.share-tab { display: flex; align-items: center; align-self: flex-start; width: 366px; height: 40px; padding-left: 14px; background: #059fdb; color: #fff; font-size: 15px; white-space: nowrap; }
.share-tab span { width: 278px; }
.rec { width: 14px; height: 14px; margin-left: 10px; border-radius: 50%; background: #ff4a1f; border: 1px solid #fff; }
.viewer-bar h1 { margin: 0 0 0 5px; font-size: 21px; font-weight: 400; color: #444; }
.viewer-controls { display: flex; margin-left: auto; }
.viewer-controls button { width: 44px; height: 40px; }
.toast { position: absolute; z-index: 2; left: 615px; top: 56px; width: 484px; height: 91px; display: flex; padding: 16px 14px 0 32px; border: 1px solid #bbb; box-shadow: inset 0 0 0 3px #fff; background: linear-gradient(#fff 10%, #fffec0 55%, #ffff99); color: #333; font-size: 16px; line-height: 23px; }
.toast-arrow { position: absolute; left: 50px; top: -17px; width: 32px; height: 18px; }
.toast-icon { width: 38px; height: 60px; }
.toast p { flex: 1; margin: 7px 0 0 20px; white-space: nowrap; font-size: 15px; }
.toast button { height: 14px; margin-top: -5px; color: #777; }

/* remote screen */
.remote { background: #efefef; border: 3px solid #f0752f; border-top: 4px solid #ea6d28; border-bottom: 4px solid #c8783f; }
.titlebar { display: flex; align-items: center; height: 77px; padding-left: 25px; font-size: 20px; }
.app-icon { width: 29px; height: 29px; }
.toggle { width: 76px; height: 36px; margin-left: auto; border: 2px solid #666; border-radius: 18px; background: #fff; padding: 4px 10px 0 0; text-align: right; font-size: 17px; position: relative; }
.toggle::before { content: ""; position: absolute; left: 4px; top: 4px; width: 24px; height: 24px; border-radius: 50%; background: #5c5c5c; }
.autosave { display: flex; align-items: center; width: 176px; margin-left: 27px; white-space: nowrap; }
.save { margin-left: 20px; }
.doc-name { width: 369px; margin-left: 21px; }
.search { flex: 0 1 746px; height: 56px; background: #fafafa; border: 1px solid #dcdcdc; border-radius: 6px; }
.user { margin-left: auto; }
.avatar { width: 42px; height: 42px; margin: 0 22px 0 19px; border-radius: 50%; background: #a4262c; color: #fff; text-align: center; line-height: 42px; font-size: 18px; }
.window-tools { display: flex; }
.window-tools button { width: 83px; height: 40px; }

.tabs { display: flex; align-items: flex-end; height: 59px; padding: 0 18px 7px 34px; gap: 35px; font-size: 22px; white-space: nowrap; }
.tabs a { line-height: 32px; border-bottom: 3px solid transparent; }
.tabs .file { padding-right: 8px; }
.tabs .active { font-weight: 600; border-color: #185c37; color: #222; }
.tabs button { height: 42px; border-radius: 6px; gap: 8px; font-size: 21px; font-weight: 600; }
.comments { width: 174px; margin-left: auto; background: #fff; border: 1px solid #ddd; }
.tabs .share { width: 119px; margin-left: -20px; background: #107c41; color: #fff; }

/* ribbon */
.ribbon { display: flex; margin: 0 12px; padding: 4px 0 0; border: 1px solid #ddd; border-width: 0 0 1px; border-radius: 12px; background: #fff; box-shadow: 0 -1px 2px #ddd; }
.group { position: relative; display: flex; flex-direction: column; justify-content: space-between; height: 168px; }
.group::after { content: ""; position: absolute; right: 0; top: 2px; bottom: 8px; width: 1px; background: #d4d4d4; }
.caption { display: flex; align-items: center; height: 30px; font-size: 18px; }
.caption span { flex: 1; text-align: center; }
.caption button { width: 28px; justify-content: flex-start; }
.caption svg { width: 16px; height: 16px; margin-left: 6px; }
.body { display: flex; }
.row { display: flex; align-items: center; height: 46px; }
.lines { padding-top: 9px; flex: 1 0 auto; }
.body .lines { flex: none; }
.lines .row { height: 56px; }
.cell { width: 46px; height: 42px; flex: none; border-radius: 6px; }
.drop { width: 24px; height: 42px; flex: none; }
.drop svg, .picker svg, .chev { width: 12px; height: 8px; color: #333; }
.dim, .dim .drop svg { color: #b5b5b5; }
.rule { width: 1px; height: 42px; margin: 0 5px; background: #d4d4d4; }
.rule.tall { height: 110px; margin: 13px 8px 0 9px; }
.narrow { width: 36px; }
.glyph { font-size: 21px; }
.bold { font-weight: 700; }
.ital { font: italic 22px/24px "Liberation Serif", serif; }
.under { text-decoration: underline; text-decoration-thickness: 2px; text-underline-offset: 4px; }
.glyph-lg { font-size: 27px; align-items: flex-start; line-height: 40px; }
.glyph-md { font-size: 24px; align-items: flex-start; line-height: 40px; }
.hat { width: 9px; height: 7px; margin-top: 8px; }
.al { width: 26px; height: 26px; fill: none; stroke: #555; stroke-width: 2; }
.al .bl { stroke: #2a8ad4; }
.on { background: #e6e6e6; }
.icon-text { font-size: 17px; fill: #444; }
.icon-num { font-size: 14px; fill: #444; }
.picker { display: flex; align-items: center; height: 42px; padding: 0 6px 0 3px; border: 1px solid #d6d6d6; border-radius: 6px; background: #fff; font-size: 19px; }
.picker select { flex: 1; min-width: 0; appearance: none; }
.big { flex-direction: column; justify-content: flex-start; width: 82px; padding-top: 5px; font-size: 20px; line-height: 29px; }
.big > span { margin-top: 5px; white-space: nowrap; }
.big span .chev { display: inline-block; vertical-align: middle; }
.big > .chev { margin-top: 8px; }
.item { gap: 7px; font-size: 20px; white-space: nowrap; }

.g-undo { width: 104px; }
.g-undo .rows { padding-left: 18px; }
.g-clip { width: 176px; }
.g-clip .body { padding-left: 10px; }
.g-clip .cell { width: 40px; }
.g-font { width: 412px; }
.g-font .lines { padding-left: 12px; }
.pick-font { width: 212px; margin-left: 3px; }
.pick-size { width: 74px; margin: 0 3px 0 5px; }
.g-align { width: 347px; }
.g-align .body { padding-left: 12px; }
.g-num { width: 188px; }
.g-num .rows { padding-left: 14px; }
.g-num .cell:first-child { width: 42px; }
.g-num .drop { width: 28px; }
.pick-num { width: 159px; }
.g-styles { width: 321px; }
.g-styles .rows { padding-left: 21px; }
.g-cells { width: 173px; }
.g-cells .rows { padding-left: 22px; }
.g-cells .item span { min-width: 66px; text-align: left; }
.g-edit { width: 261px; }
.g-edit .body { padding-left: 22px; }
.g-edit .cell { width: 31px; }
.g-edit .rows { width: 62px; }
.g-analysis { width: 108px; }
.g-analysis .big { width: 108px; }
.collapse { align-self: flex-end; width: 36px; height: 40px; margin: 0 7px 2px auto; }

/* formula bar */
.formula { display: flex; align-items: center; height: 66px; padding: 6px 12px 0; }
.field { display: flex; align-items: center; height: 40px; background: #fff; border: 1px solid #e2e2e2; border-radius: 6px; padding: 0 8px; }
.field input { flex: 1; min-width: 0; font-size: 21px; outline: 0; }
.namebox { width: 178px; }
.dots { width: 4px; height: 20px; }
.formula .dots { margin: 0 16px; }
.fx { width: 127px; justify-content: space-between; padding: 0 7px 0 9px; }
.fxbtn { font: italic 700 26px/30px "Liberation Serif", serif; }
.entry { flex: 1; margin-left: 10px; }

/* grid */
.sheet { display: flex; }
table { flex: 1; min-width: 0; table-layout: fixed; border-collapse: collapse; background: #fff; border-right: 1px solid #bbb; border-bottom: 2px solid #b5b5b5; }
.c0 { width: 80px; } .cA { width: 136px; } .cB { width: 268px; } .cC { width: 317px; } .cD { width: 338px; } .cE { width: 295px; } .cF { width: 318px; } .cG { width: 298px; }
th, td { height: 60px; padding: 5px 0 0; border: 1px solid #e0e0e0; line-height: 48px; text-align: center; white-space: nowrap; }
th { background: #efefef; color: #444; font-weight: 400; font-size: 39px; }
thead th { border-top: 0; border-bottom-color: #aaa; }
tbody th { border-left: 0; border-right-color: #bbb; }
th.sel { background: #e0e0e0; color: #1e7145; }
thead .sel { border-bottom: 2px solid #1e7145; }
tbody .sel { border-right: 3px solid #1e7145; }
.corner { border-left: 0; padding-top: 0; }
.corner svg { margin: 8px 0 0 26px; }
.colH { padding-left: 28px; }
td { color: #000; font-family: Calibri, Carlito, "Open Sans", sans-serif; font-size: 45px; }
.box { border: 1px solid #111; }
td:has(+ .box) { border-right-color: #111; }
.over { border-bottom-color: #111; }
.head, .key { font-weight: 700; font-size: 46px; }
.key { text-align: right; padding-right: 7px; background: #ffe699; }
.blue { background: #9bc2e6; } .orange { background: #f4b084; } .green { background: #c6e0b4; }
.peek th, .peek td { height: 9px; padding: 0; line-height: 0; border-bottom: 0; }
.current, .pointer-cell { position: relative; }
.current::before { content: ""; position: absolute; inset: -2px; border: 2px solid #1e7145; }
.current::after { content: ""; position: absolute; right: -4px; bottom: -4px; width: 8px; height: 8px; background: #1e7145; border: 1px solid #fff; }
.pointer { position: absolute; right: -13px; top: 26px; width: 18px; height: 18px; }
.vscroll { display: flex; flex-direction: column; align-items: center; width: 32px; padding: 12px 0 6px; background: #f4f4f4; }
.vtrack { flex: 1; width: 15px; padding: 10px 0; }
.vtrack i { display: block; height: 55%; border-radius: 8px; background: #6e6e6e; }

.sheetbar { display: flex; align-items: flex-start; height: 40px; padding-left: 15px; background: #f5f5f5; border-bottom: 2px solid #fff; }
.nav { width: 40px; height: 38px; }
.sheet-tab { width: 104px; height: 37px; margin: -1px 45px 0 40px; background: #fff; border: 1px solid #bbb; border-width: 0 1px 3px; border-bottom-color: #107c41; color: #1e7145; font-size: 21px; font-weight: 600; }
.add { height: 38px; }
.hscroll { display: flex; align-items: center; width: 866px; height: 38px; margin: 0 39px 0 auto; }
.hscroll .dots { margin-right: 28px; }
.htrack { flex: 1; margin: 0 10px; }
.htrack i { display: block; width: 88%; height: 15px; border-radius: 8px; background: #6e6e6e; }

.status { display: flex; align-items: center; height: 38px; padding: 0 10px; background: #f4f4f4; border-bottom: 1px solid #ddd; font-size: 17px; white-space: nowrap; }
.ready { width: 82px; }
.access, .display { gap: 5px; }
.display { margin: 0 32px 0 auto; }
.view { width: 70px; height: 37px; border-radius: 0; }
.zoom-btn { width: 34px; height: 30px; }
.zoom { appearance: none; width: 173px; height: 20px; background: linear-gradient(#666, #666) 50% / 2px 10px no-repeat, linear-gradient(#777, #777) 50% / 100% 2px no-repeat; }
.zoom::-webkit-slider-thumb { appearance: none; width: 10px; height: 20px; background: #666; }
.pct { width: 59px; text-align: right; }

.taskbar { display: flex; align-items: center; height: 81px; background: linear-gradient(90deg, #cbeefb, #cdeefa 30%, #d0e9f8 52%, #d2e2f5 75%, #d6dbf1); font-size: 20px; line-height: 28px; }
.weather { width: 621px; padding-left: 46px; }
.weather span { color: #667; }
.apps { display: grid; grid-template-columns: repeat(13, 1fr); width: 1009px; align-self: stretch; }
.apps button { position: relative; }
.apps svg { width: 40px; height: 42px; }
.run::after { content: ""; position: absolute; bottom: 3px; width: 11px; height: 6px; border-radius: 3px; background: #6d7f8c; }
.open::after { width: 27px; background: #1577d3; }
.open::before { content: ""; position: absolute; inset: 8px 8px 4px; border-radius: 6px; background: #f3f8fc; }
.open svg { position: relative; }
.tray { display: flex; align-items: center; margin-left: auto; padding-right: 22px; color: #222; }
.tray button { width: 43px; height: 40px; }
.tray .cloud { width: 56px; }
.lang { width: 90px; text-align: center; }
.tray time { width: 125px; margin-right: 13px; text-align: right; }

/* viewer backdrop and host taskbar */
.desktop { flex: 1; min-height: 100px; display: flex; justify-content: flex-end; padding: 10px 45px 0 0; }
.watermark { width: 78px; height: 78px; opacity: .4; }
.hostbar { display: flex; height: 13px; overflow: hidden; background: #34373f; color: #fff; font-size: 15px; padding-left: 72px; }
.hostbar span { padding-top: 5px; }
.h-search { width: 515px; background: #f0f0f0; border-top: 1px solid #aaa; }
.h-cyan { width: 14px; height: 5px; margin: 12px 0 0 180px; border-radius: 7px; background: #2fc4e0; }
.h-yellow { width: 2px; height: 1px; margin: 12px 335px 0 371px; background: #e0c040; }
.h-active { width: 73px; background: #5e6267; }
.h-lang { margin: 0 32px 0 auto; }
.h-edge { width: 1px; margin: 0 6px 0 92px; background: #777; }
```
